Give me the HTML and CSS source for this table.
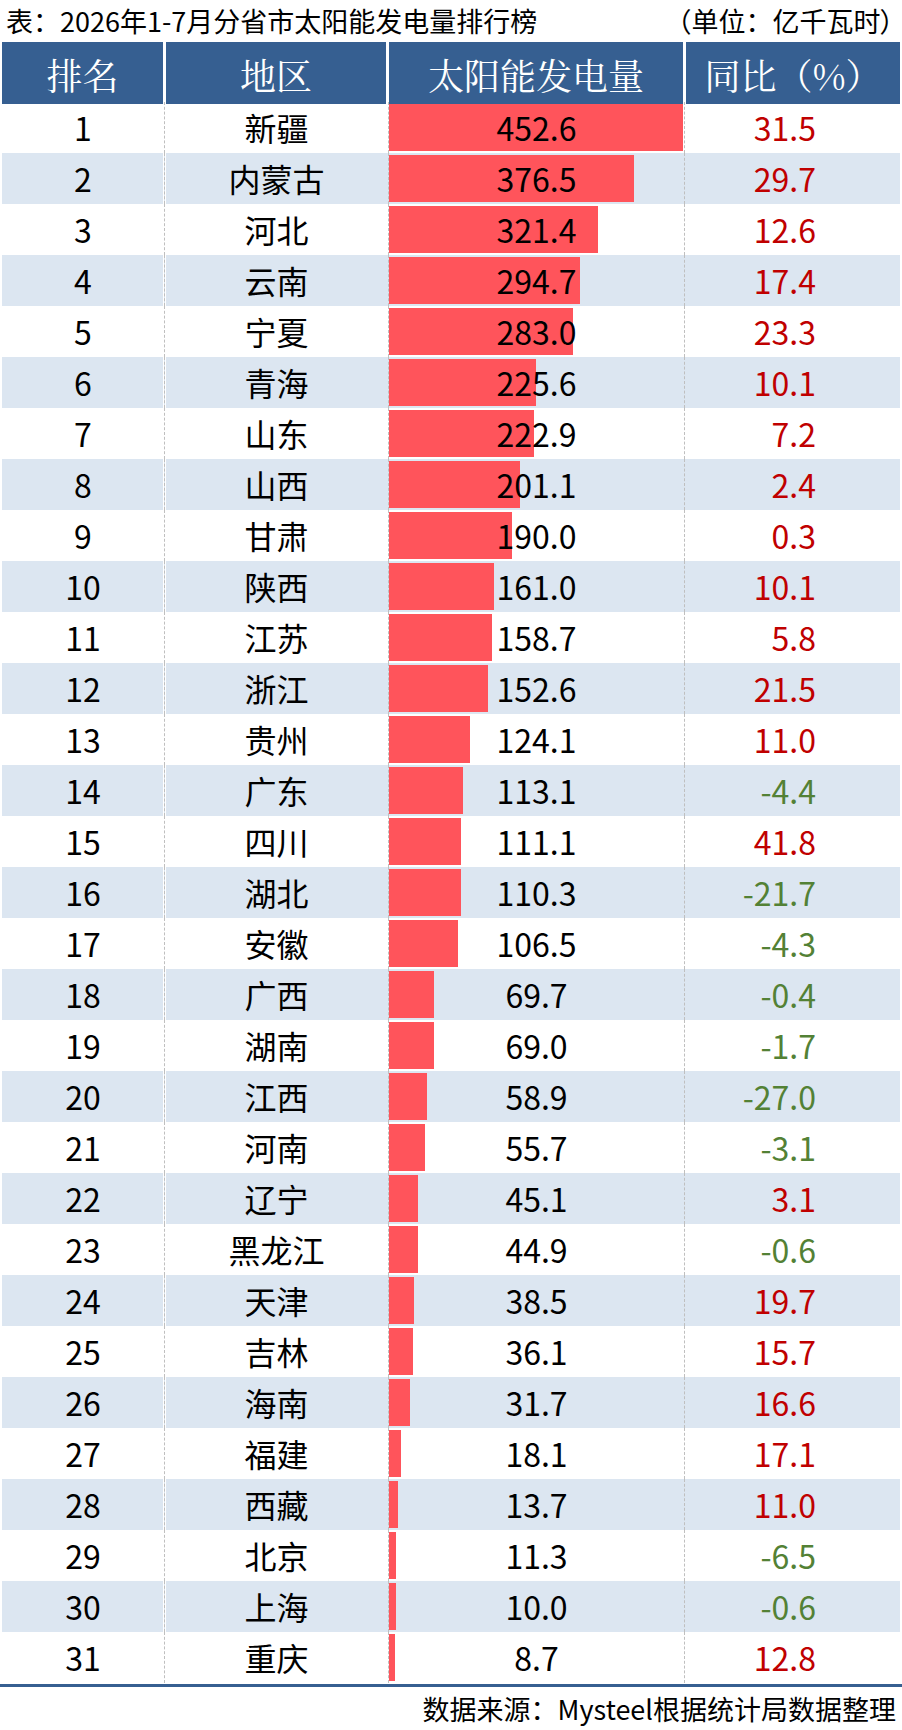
FILE: index.html
```html
<!DOCTYPE html>
<html lang="zh-CN">
<head>
<meta charset="utf-8">
<title>2026年1-7月分省市太阳能发电量排行榜</title>
<link rel="stylesheet" href="styles.css">
</head>
<body>
<div class="page">
  <div class="title">
    <span class="t-main">表：2026年1-7月分省市太阳能发电量排行榜</span>
    <span class="t-unit">（单位：亿千瓦时<span class="cp">）</span></span>
  </div>
  <div class="head">
    <div>排名</div>
    <div>地区</div>
    <div>太阳能发电量</div>
    <div>同比（%）</div>
  </div>
  <div class="rows">
    <div class="row"><div class="c1">1</div><div class="c2">新疆</div><div class="c3"><span class="bar" style="width:294px"></span><span class="v">452.6</span></div><div class="c4 up">31.5</div></div>
    <div class="row alt"><div class="c1">2</div><div class="c2">内蒙古</div><div class="c3"><span class="bar" style="width:244.6px"></span><span class="v">376.5</span></div><div class="c4 up">29.7</div></div>
    <div class="row"><div class="c1">3</div><div class="c2">河北</div><div class="c3"><span class="bar" style="width:208.8px"></span><span class="v">321.4</span></div><div class="c4 up">12.6</div></div>
    <div class="row alt"><div class="c1">4</div><div class="c2">云南</div><div class="c3"><span class="bar" style="width:191.4px"></span><span class="v">294.7</span></div><div class="c4 up">17.4</div></div>
    <div class="row"><div class="c1">5</div><div class="c2">宁夏</div><div class="c3"><span class="bar" style="width:183.8px"></span><span class="v">283.0</span></div><div class="c4 up">23.3</div></div>
    <div class="row alt"><div class="c1">6</div><div class="c2">青海</div><div class="c3"><span class="bar" style="width:146.5px"></span><span class="v">225.6</span></div><div class="c4 up">10.1</div></div>
    <div class="row"><div class="c1">7</div><div class="c2">山东</div><div class="c3"><span class="bar" style="width:144.8px"></span><span class="v">222.9</span></div><div class="c4 up">7.2</div></div>
    <div class="row alt"><div class="c1">8</div><div class="c2">山西</div><div class="c3"><span class="bar" style="width:130.6px"></span><span class="v">201.1</span></div><div class="c4 up">2.4</div></div>
    <div class="row"><div class="c1">9</div><div class="c2">甘肃</div><div class="c3"><span class="bar" style="width:123.4px"></span><span class="v">190.0</span></div><div class="c4 up">0.3</div></div>
    <div class="row alt"><div class="c1">10</div><div class="c2">陕西</div><div class="c3"><span class="bar" style="width:104.6px"></span><span class="v">161.0</span></div><div class="c4 up">10.1</div></div>
    <div class="row"><div class="c1">11</div><div class="c2">江苏</div><div class="c3"><span class="bar" style="width:103.1px"></span><span class="v">158.7</span></div><div class="c4 up">5.8</div></div>
    <div class="row alt"><div class="c1">12</div><div class="c2">浙江</div><div class="c3"><span class="bar" style="width:99.1px"></span><span class="v">152.6</span></div><div class="c4 up">21.5</div></div>
    <div class="row"><div class="c1">13</div><div class="c2">贵州</div><div class="c3"><span class="bar" style="width:80.6px"></span><span class="v">124.1</span></div><div class="c4 up">11.0</div></div>
    <div class="row alt"><div class="c1">14</div><div class="c2">广东</div><div class="c3"><span class="bar" style="width:73.5px"></span><span class="v">113.1</span></div><div class="c4 down">-4.4</div></div>
    <div class="row"><div class="c1">15</div><div class="c2">四川</div><div class="c3"><span class="bar" style="width:72.2px"></span><span class="v">111.1</span></div><div class="c4 up">41.8</div></div>
    <div class="row alt"><div class="c1">16</div><div class="c2">湖北</div><div class="c3"><span class="bar" style="width:71.6px"></span><span class="v">110.3</span></div><div class="c4 down">-21.7</div></div>
    <div class="row"><div class="c1">17</div><div class="c2">安徽</div><div class="c3"><span class="bar" style="width:69.2px"></span><span class="v">106.5</span></div><div class="c4 down">-4.3</div></div>
    <div class="row alt"><div class="c1">18</div><div class="c2">广西</div><div class="c3"><span class="bar" style="width:45.3px"></span><span class="v">69.7</span></div><div class="c4 down">-0.4</div></div>
    <div class="row"><div class="c1">19</div><div class="c2">湖南</div><div class="c3"><span class="bar" style="width:44.8px"></span><span class="v">69.0</span></div><div class="c4 down">-1.7</div></div>
    <div class="row alt"><div class="c1">20</div><div class="c2">江西</div><div class="c3"><span class="bar" style="width:38.3px"></span><span class="v">58.9</span></div><div class="c4 down">-27.0</div></div>
    <div class="row"><div class="c1">21</div><div class="c2">河南</div><div class="c3"><span class="bar" style="width:36.2px"></span><span class="v">55.7</span></div><div class="c4 down">-3.1</div></div>
    <div class="row alt"><div class="c1">22</div><div class="c2">辽宁</div><div class="c3"><span class="bar" style="width:29.3px"></span><span class="v">45.1</span></div><div class="c4 up">3.1</div></div>
    <div class="row"><div class="c1">23</div><div class="c2">黑龙江</div><div class="c3"><span class="bar" style="width:29.2px"></span><span class="v">44.9</span></div><div class="c4 down">-0.6</div></div>
    <div class="row alt"><div class="c1">24</div><div class="c2">天津</div><div class="c3"><span class="bar" style="width:25px"></span><span class="v">38.5</span></div><div class="c4 up">19.7</div></div>
    <div class="row"><div class="c1">25</div><div class="c2">吉林</div><div class="c3"><span class="bar" style="width:23.5px"></span><span class="v">36.1</span></div><div class="c4 up">15.7</div></div>
    <div class="row alt"><div class="c1">26</div><div class="c2">海南</div><div class="c3"><span class="bar" style="width:20.6px"></span><span class="v">31.7</span></div><div class="c4 up">16.6</div></div>
    <div class="row"><div class="c1">27</div><div class="c2">福建</div><div class="c3"><span class="bar" style="width:11.8px"></span><span class="v">18.1</span></div><div class="c4 up">17.1</div></div>
    <div class="row alt"><div class="c1">28</div><div class="c2">西藏</div><div class="c3"><span class="bar" style="width:8.9px"></span><span class="v">13.7</span></div><div class="c4 up">11.0</div></div>
    <div class="row"><div class="c1">29</div><div class="c2">北京</div><div class="c3"><span class="bar" style="width:7.3px"></span><span class="v">11.3</span></div><div class="c4 down">-6.5</div></div>
    <div class="row alt"><div class="c1">30</div><div class="c2">上海</div><div class="c3"><span class="bar" style="width:6.5px"></span><span class="v">10.0</span></div><div class="c4 down">-0.6</div></div>
    <div class="row"><div class="c1">31</div><div class="c2">重庆</div><div class="c3"><span class="bar" style="width:5.7px"></span><span class="v">8.7</span></div><div class="c4 up">12.8</div></div>
  </div>
  <div class="rule"></div>
  <div class="source">数据来源：Mysteel根据统计局数据整理</div>
</div>
</body>
</html>
```

FILE: styles.css
```css
html, body {
  margin: 0;
  padding: 0;
  background: #ffffff;
}

.page {
  width: 902px;
  font-family: "Noto Sans CJK SC", "Noto Sans", sans-serif;
  color: #000000;
}

.title {
  display: flex;
  justify-content: space-between;
  height: 42px;
  line-height: 42px;
  font-size: 27px;
  padding-left: 6px;
  padding-right: 8px;
  white-space: nowrap;
}

.cp {
  font-feature-settings: "palt" 1;
}

.head {
  display: grid;
  grid-template-columns: 161px 220px 294px 214px;
  column-gap: 3px;
  margin-left: 2px;
  height: 59px;
}

.head div {
  background: #365f91;
  color: #ffffff;
  font-family: "Noto Serif CJK SC", "Noto Sans CJK SC", serif;
  font-size: 36px;
  line-height: 59px;
  padding-top: 3px;
  box-sizing: border-box;
  text-align: center;
  white-space: nowrap;
}

.rows {
  margin-top: 1px;
}

.row {
  display: grid;
  grid-template-columns: 162px 224px 296px 216px;
  margin-left: 2px;
  height: 51px;
  font-size: 32px;
  line-height: 51px;
}

.row > div {
  box-sizing: border-box;
  white-space: nowrap;
}

.row.alt > div {
  background: #dce6f1;
}

.c1 {
  text-align: center;
}

.row.alt .c1 {
  box-shadow: inset -1px 0 0 #ffffff;
}

.c2 {
  text-align: center;
  border-left: 1px dashed #bfbfbf;
}

.row.alt .c2 {
  box-shadow: inset 1px 0 0 #ffffff;
}

.c3 {
  position: relative;
  text-align: center;
  border-left: 1px dashed #bfbfbf;
}

.bar {
  position: absolute;
  left: 0;
  top: 2px;
  bottom: 2px;
  background: #ff545b;
}

.v {
  position: relative;
}

.c4 {
  text-align: right;
  padding-right: 84px;
  border-left: 1px dashed #bfbfbf;
}

.up {
  color: #c00000;
}

.down {
  color: #538135;
}

.rule {
  margin-top: 1px;
  height: 3px;
  background: #365f91;
}

.source {
  height: 43px;
  line-height: 43px;
  font-size: 27px;
  text-align: right;
  padding-right: 6px;
}
```
